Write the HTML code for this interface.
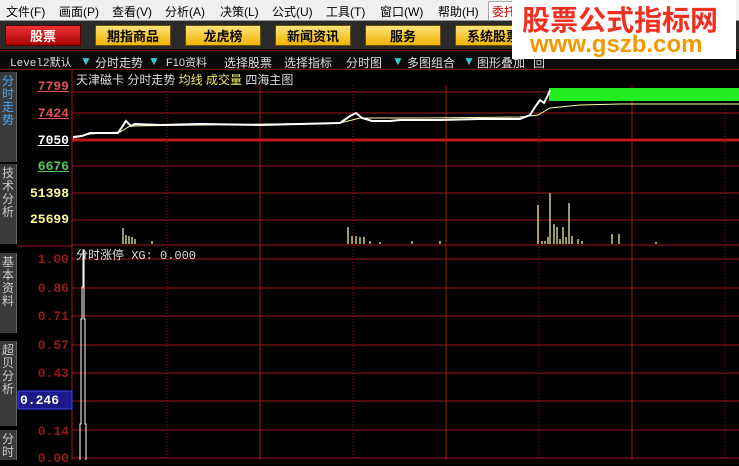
<!DOCTYPE html>
<html><head><meta charset="utf-8"><style>
*{margin:0;padding:0;box-sizing:border-box}
body{width:739px;height:460px;overflow:hidden;background:#000;font-family:"Liberation Sans","Noto Sans CJK SC",sans-serif;position:relative}
.menu{position:absolute;left:0;top:0;width:739px;height:20px;background:#f0f0f0;font-size:12px;color:#000}
.menu span{position:absolute;top:3px}
.tb{position:absolute;left:0;top:20px;width:739px;height:29px;background:#2a2a2a;border-top:1px solid #999}
.btn{position:absolute;top:4px;height:21px;width:76px;font-size:13px;font-weight:bold;text-align:center;line-height:21px;background:linear-gradient(#ffe27a,#f0b400);color:#000;border:1px solid #6b5000}
.tabs{position:absolute;left:0;top:50px;width:739px;height:20px;background:#0a0a0a;border-top:1px solid #600;border-bottom:1px solid #600;font-size:12px;color:#ddd}
.tabs span{position:absolute;top:3px}
.wm{position:absolute;left:512px;top:0;width:224px;height:59px;background:#fff;overflow:hidden}
.lab{position:absolute;font-size:13px;font-weight:bold;font-family:"Liberation Mono",monospace;text-align:right;width:52px;left:17px}
.side{position:absolute;left:0;width:17px;background:#3a3a3a;color:#ccc;font-size:12px;line-height:13px;text-align:center;padding-top:3px;border-right:1px solid #666}
</style></head><body>
<div class="menu">
<span style="left:6px">文件(F)</span><span style="left:59px">画面(P)</span><span style="left:112px">查看(V)</span><span style="left:165px">分析(A)</span><span style="left:220px">决策(L)</span><span style="left:272px">公式(U)</span><span style="left:326px">工具(T)</span><span style="left:380px">窗口(W)</span><span style="left:438px">帮助(H)</span>
<span style="left:488px;top:1px;border:1px solid #aaa;background:#fff;color:#c00;padding:1px 3px">委托</span>
</div>
<div class="tb">
<div class="btn" style="left:5px;background:linear-gradient(#e33,#a00);color:#fff;border-color:#500">股票</div>
<div class="btn" style="left:95px">期指商品</div>
<div class="btn" style="left:185px">龙虎榜</div>
<div class="btn" style="left:275px">新闻资讯</div>
<div class="btn" style="left:365px">服务</div>
<div class="btn" style="left:455px">系统股票</div>
</div>
<div class="tabs">
<span style="left:10px;font-family:'Liberation Mono','Noto Sans CJK SC',monospace;font-size:11px">Level2默认</span><span style="left:80px;color:#3cc">▼</span>
<span style="left:95px">分时走势</span><span style="left:148px;color:#3cc">▼</span>
<span style="left:166px;font-size:11px">F10资料</span>
<span style="left:224px">选择股票</span><span style="left:284px">选择指标</span><span style="left:346px">分时图</span><span style="left:392px;color:#3cc">▼</span>
<span style="left:407px">多图组合</span><span style="left:463px;color:#3cc">▼</span><span style="left:477px">图形叠加</span><span style="left:533px">回</span>
</div>
<div class="wm">
<div style="position:absolute;left:10px;top:3px;font-size:28px;font-weight:bold;color:#f03020;white-space:nowrap;font-family:'Noto Sans CJK SC',sans-serif;line-height:32px">股票公式指标网</div>
<div style="position:absolute;left:18px;top:33px;font-size:24px;font-weight:bold;color:#f39800;line-height:24px;white-space:nowrap">www.gszb.com</div>
</div>
<div class="side" style="top:72px;height:90px;color:#4af">分<br>时<br>走<br>势</div>
<div class="side" style="top:164px;height:80px">技<br>术<br>分<br>析</div>
<div class="side" style="top:253px;height:80px">基<br>本<br>资<br>料</div>
<div class="side" style="top:341px;height:85px">超<br>贝<br>分<br>析</div>
<div class="side" style="top:430px;height:30px">分<br>时</div>
<svg style="position:absolute;left:0;top:70px" width="739" height="390">
<g stroke="#a01818" stroke-width="1">
<line x1="72" y1="22" x2="739" y2="22"/><line x1="72" y1="43" x2="739" y2="43"/>
<line x1="72" y1="96" x2="739" y2="96"/><line x1="72" y1="123" x2="739" y2="123"/><line x1="72" y1="150" x2="739" y2="150"/><line x1="72" y1="175" x2="739" y2="175"/>
<line x1="72" y1="189" x2="739" y2="189"/><line x1="72" y1="218" x2="739" y2="218"/><line x1="72" y1="246" x2="739" y2="246"/><line x1="72" y1="275" x2="739" y2="275"/><line x1="72" y1="303" x2="739" y2="303"/><line x1="72" y1="331" x2="739" y2="331"/><line x1="72" y1="360" x2="739" y2="360"/><line x1="72" y1="388" x2="739" y2="388"/>
<line x1="72" y1="0" x2="72" y2="390"/>
<line x1="260" y1="15" x2="260" y2="390"/><line x1="446" y1="15" x2="446" y2="390"/><line x1="632" y1="15" x2="632" y2="390"/>
<line x1="18" y1="176" x2="72" y2="176"/>
</g>
<line x1="72" y1="70" x2="739" y2="70" stroke="#c01818" stroke-width="3"/>
<g stroke="#a01818" stroke-dasharray="1,2">
<line x1="167" y1="15" x2="167" y2="390"/><line x1="353" y1="15" x2="353" y2="390"/><line x1="539" y1="15" x2="539" y2="390"/><line x1="725" y1="15" x2="725" y2="390"/>
</g>
<rect x="549" y="18" width="190" height="13" fill="#22ee22"/>
<polyline fill="none" stroke="#ffffa0" stroke-width="1" points="73,68 90,64 120,62 130,56 200,55 340,53 360,48 420,48 520,47 538,45 550,38 580,35 620,34 739,34"/>
<polyline fill="none" stroke="#fff" stroke-width="2" points="73,67 82,66 90,63 118,63 122,57 126,51 131,56 135,54 160,55 200,54 260,55 300,54 340,53 350,46 356,43 362,48 372,51 390,51 400,50 440,50 480,49 520,49 530,45 535,37 540,30 544,33 548,25 550,20"/>
<g stroke="#ffffa0" stroke-width="1.2">
<line x1="123" y1="174" x2="123" y2="158"/><line x1="126" y1="174" x2="126" y2="165"/><line x1="129" y1="174" x2="129" y2="166"/><line x1="132" y1="174" x2="132" y2="167"/><line x1="135" y1="174" x2="135" y2="169"/><line x1="152" y1="174" x2="152" y2="171"/>
<line x1="348" y1="174" x2="348" y2="157"/><line x1="352" y1="174" x2="352" y2="166"/><line x1="356" y1="174" x2="356" y2="166"/><line x1="360" y1="174" x2="360" y2="167"/><line x1="364" y1="174" x2="364" y2="167"/><line x1="370" y1="174" x2="370" y2="171"/><line x1="380" y1="174" x2="380" y2="172"/><line x1="412" y1="174" x2="412" y2="171"/><line x1="440" y1="174" x2="440" y2="171"/>
<line x1="538" y1="174" x2="538" y2="135"/><line x1="542" y1="174" x2="542" y2="171"/><line x1="545" y1="174" x2="545" y2="171"/><line x1="548" y1="174" x2="548" y2="167"/><line x1="550" y1="174" x2="550" y2="123"/><line x1="554" y1="174" x2="554" y2="154"/><line x1="557" y1="174" x2="557" y2="157"/><line x1="560" y1="174" x2="560" y2="169"/><line x1="563" y1="174" x2="563" y2="157"/><line x1="566" y1="174" x2="566" y2="167"/><line x1="569" y1="174" x2="569" y2="133"/><line x1="572" y1="174" x2="572" y2="166"/><line x1="578" y1="174" x2="578" y2="169"/><line x1="582" y1="174" x2="582" y2="171"/><line x1="612" y1="174" x2="612" y2="164"/><line x1="619" y1="174" x2="619" y2="164"/><line x1="656" y1="174" x2="656" y2="172"/>
</g>
<polyline fill="none" stroke="#fff" stroke-width="1" points="80,390 80,354 81,354 81,249 82,249 82,217 83,217 83,180 84,180 84,249 85,249 85,354 86,354 86,390"/>
<rect x="18" y="321" width="54" height="18" fill="#1a1a8a" stroke="#44f"/>
</svg>
<div style="position:absolute;left:76px;top:71px;font-size:12px;color:#ddd">天津磁卡 分时走势 <span style="color:#ee6">均线 成交量</span> 四海主图</div>
<div style="position:absolute;left:76px;top:246px;font-size:12px;color:#ddd;font-family:'Liberation Mono','Noto Sans CJK SC',monospace">分时涨停 XG: 0.000</div>
<div class="lab" style="top:79px;color:#e05050;text-decoration:underline">7799</div>
<div class="lab" style="top:106px;color:#e05050;text-decoration:underline">7424</div>
<div class="lab" style="top:133px;color:#fff;text-decoration:underline">7050</div>
<div class="lab" style="top:159px;color:#5c5;text-decoration:underline">6676</div>
<div class="lab" style="top:186px;color:#ffff90">51398</div>
<div class="lab" style="top:212px;color:#ffff90">25699</div>
<div class="lab" style="top:252px;color:#9a1818">1.00</div>
<div class="lab" style="top:281px;color:#9a1818">0.86</div>
<div class="lab" style="top:309px;color:#9a1818">0.71</div>
<div class="lab" style="top:338px;color:#9a1818">0.57</div>
<div class="lab" style="top:366px;color:#9a1818">0.43</div>
<div style="position:absolute;left:20px;top:393px;font-size:13px;font-weight:bold;color:#fff;font-family:'Liberation Mono',monospace">0.246</div>
<div class="lab" style="top:424px;color:#9a1818">0.14</div>
<div class="lab" style="top:451px;color:#9a1818">0.00</div>
</body></html>
